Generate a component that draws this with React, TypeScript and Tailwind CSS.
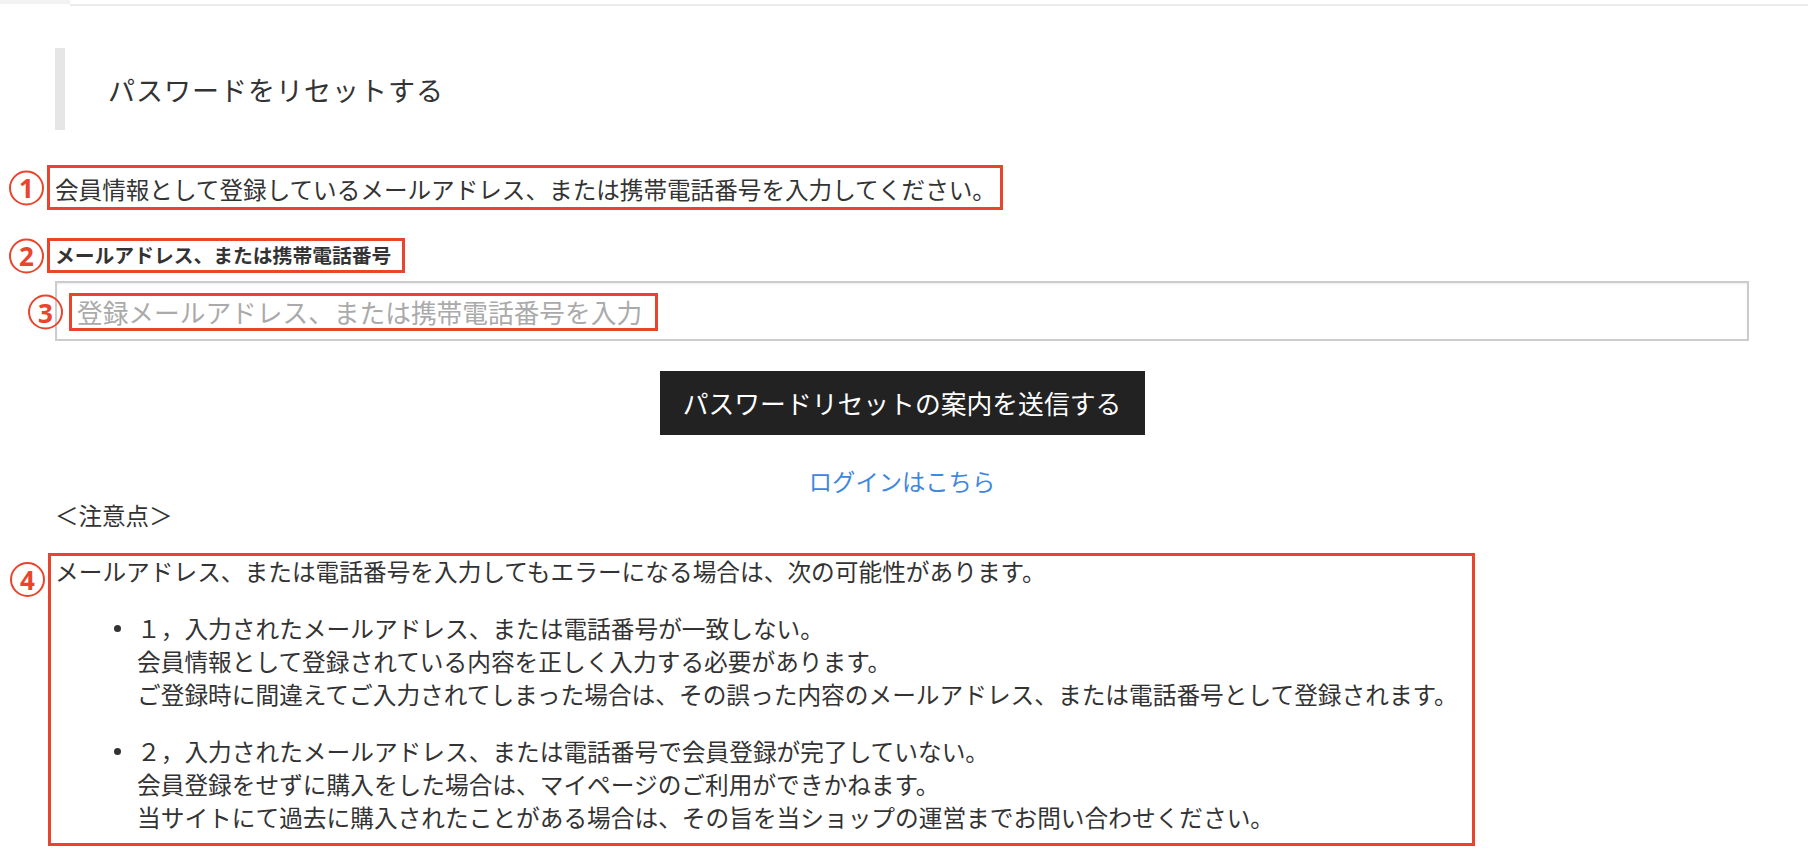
import React from 'react'

// 注釈の丸数字
function Num({ n }: { n: string }) {
  return (
    <span className="flex h-[35px] w-[35px] items-center justify-center rounded-full border-2 border-[#e9442c] font-['Noto_Sans',sans-serif] text-[26px] font-bold leading-none text-[#e9442c]">
      {n}
    </span>
  )
}

const notes = [
  [
    '１，入力されたメールアドレス、または電話番号が一致しない。',
    '会員情報として登録されている内容を正しく入力する必要があります。',
    'ご登録時に間違えてご入力されてしまった場合は、その誤った内容のメールアドレス、または電話番号として登録されます。',
  ],
  [
    '２，入力されたメールアドレス、または電話番号で会員登録が完了していない。',
    '会員登録をせずに購入をした場合は、マイページのご利用ができかねます。',
    '当サイトにて過去に購入されたことがある場合は、その旨を当ショップの運営までお問い合わせください。',
  ],
]

export default function App() {
  return (
    <div className="min-h-screen bg-white font-['Noto_Sans_CJK_JP',sans-serif] text-[#333333]">
      {/* タブの下線 */}
      <div className="flex h-[6px]">
        <div className="h-[4px] w-[70px] bg-[#f2f2f2]" />
        <div className="mt-[4px] h-[2px] flex-1 bg-[#ebebeb]" />
      </div>

      <div className="pl-[55px] pr-[59px]">
        <div className="mt-[42px] flex h-[82px] items-center border-l-[10px] border-[#e6e6e6] pl-[43px]">
          <h1 className="text-[27px] font-normal leading-none tracking-[1px]">パスワードをリセットする</h1>
        </div>

        <div className="mt-[41px]">
          <span className="relative inline-block text-[23.6px] leading-[36px]">
            会員情報として登録しているメールアドレス、または携帯電話番号を入力してください。
            <span className="absolute -bottom-[3px] -left-[8px] -right-[7px] -top-[6px] border-[3px] border-[#e9442c]">
              <span className="absolute right-full top-1/2 mr-[6px] -translate-y-1/2">
                <Num n="1" />
              </span>
            </span>
          </span>
        </div>

        <div className="mt-[33px]">
          <span className="relative inline-block text-[19.8px] font-bold leading-[30px]">
            メールアドレス、または携帯電話番号
            <span className="absolute -bottom-[3px] -left-[8px] -right-[14px] -top-[2px] border-[3px] border-[#e9442c]">
              <span className="absolute right-full top-1/2 mr-[6px] -translate-y-1/2">
                <Num n="2" />
              </span>
            </span>
          </span>
        </div>

        <div className="relative mt-[11px]">
          <input
            type="text"
            placeholder="登録メールアドレス、または携帯電話番号を入力"
            className="h-[60px] w-full border-2 border-[#cccccc] px-[20px] font-['Noto_Sans_CJK_JP',sans-serif] text-[25.7px] shadow-[inset_0_1px_2px_rgba(0,0,0,0.08)] outline-none placeholder:text-[#aaaaaa]"
          />
          <span className="pointer-events-none absolute left-[14px] top-[12px] h-[38px] w-[589px] border-[3px] border-[#e9442c]">
            <span className="absolute right-full top-1/2 mr-[9px] -translate-y-1/2">
              <Num n="3" />
            </span>
          </span>
        </div>

        <div className="mt-[30px] flex justify-center">
          <button className="h-[64px] w-[485px] bg-[#222222] text-[25.8px] text-white">
            パスワードリセットの案内を送信する
          </button>
        </div>

        <div className="mt-[31px] text-center text-[23.3px] leading-[30px]">
          <a href="#" className="text-[#3f87dd]">ログインはこちら</a>
        </div>

        <p className="mt-[4px] text-[23.5px] leading-[30px]">＜注意点＞</p>

        <div className="relative mt-[25px] text-[23.7px] leading-[33px]">
          <span className="pointer-events-none absolute -bottom-[12px] -left-[7px] -top-[2px] w-[1427px] border-[3px] border-[#e9442c]">
            <span className="absolute right-full top-[6px] mr-[6px]">
              <Num n="4" />
            </span>
          </span>
          <p>メールアドレス、または電話番号を入力してもエラーになる場合は、次の可能性があります。</p>
          <ul className="mt-[24px] flex flex-col gap-[24px]">
            {notes.map((lines, i) => (
              <li key={i} className="flex">
                <span className="ml-[59px] mt-[13px] h-[7px] w-[7px] shrink-0 rounded-full bg-[#333333]" />
                <div className="ml-[16px]">
                  {lines.map((l) => (
                    <div key={l}>{l}</div>
                  ))}
                </div>
              </li>
            ))}
          </ul>
        </div>
      </div>
    </div>
  )
}
